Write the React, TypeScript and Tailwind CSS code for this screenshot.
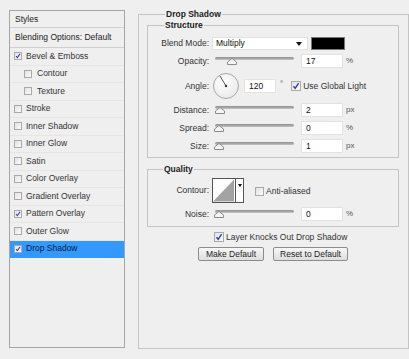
import React from "react";

const font = { fontFamily: '"Liberation Sans", Arial, sans-serif' };

function Check({ checked, size = 8 }: { checked?: boolean; size?: number }) {
  return (
    <span
      className="inline-flex shrink-0 items-center justify-center border border-[#a9a9a9] bg-gradient-to-br from-[#e2e2e2] to-[#fbfbfb]"
      style={{ width: size, height: size }}
    >
      {checked && (
        <svg width={size - 2} height={size - 2} viewBox="0 0 8 8">
          <path d="M1.5 4.2 L3.2 6.3 L6.6 1.2" fill="none" stroke="#2a3fa8" strokeWidth="1.4" />
        </svg>
      )}
    </span>
  );
}

const styleRows: { label: string; checked?: boolean; indent?: boolean; active?: boolean }[] = [
  { label: "Bevel & Emboss", checked: true },
  { label: "Contour", indent: true },
  { label: "Texture", indent: true },
  { label: "Stroke" },
  { label: "Inner Shadow" },
  { label: "Inner Glow" },
  { label: "Satin" },
  { label: "Color Overlay" },
  { label: "Gradient Overlay" },
  { label: "Pattern Overlay", checked: true },
  { label: "Outer Glow" },
  { label: "Drop Shadow", checked: true, active: true },
];

function Slider({ value, max }: { value: number; max: number }) {
  const left = 2 + (value / max) * 75;
  return (
    <div className="relative ml-[3px] h-full w-[85px]">
      <div className="absolute left-[3px] right-[3px] top-[3px] h-[3px] rounded-full bg-gradient-to-b from-[#8d8d8d] to-[#c4c4c4]" />
      <svg className="absolute top-[4px]" style={{ left }} width="10" height="7" viewBox="0 0 10 7">
        <path d="M5 0.5 L9.5 4 L9.5 6.5 L0.5 6.5 L0.5 4 Z" fill="#f4f4f4" stroke="#8a8a8a" strokeWidth="1" />
      </svg>
    </div>
  );
}

function Field({ value, w = 42 }: { value: string; w?: number }) {
  return (
    <div
      className="flex h-[14px] items-center border border-[#e2e2e2] bg-white pl-[4px] text-[8.5px] text-[#111]"
      style={{ width: w }}
    >
      {value}
    </div>
  );
}

function Label({ children }: { children: React.ReactNode }) {
  return <div className="w-[61px] shrink-0 text-right text-[8.5px] text-[#333]">{children}</div>;
}

function SliderRow({ label, value, max, unit, mt }: { label: string; value: number; max: number; unit: string; mt: string }) {
  return (
    <div className={`flex h-[14px] items-center ${mt}`}>
      <Label>{label}</Label>
      <Slider value={value} max={max} />
      <div className="ml-[4px]">
        <Field value={String(value)} />
      </div>
      <div className="ml-[3px] text-[8px] text-[#555]">{unit}</div>
    </div>
  );
}

export default function App() {
  return (
    <div className="flex h-[359px] w-[409px] overflow-hidden bg-[#efefef] pl-[9px] pt-[10px]" style={font}>
      {/* Left styles list */}
      <div className="flex h-[338px] w-[116px] shrink-0 flex-col border border-[#a5a5a5] bg-[#efefef]">
        <div className="flex h-[17px] items-center border-b border-[#cfcfcf] pl-[5px] text-[8.5px] text-[#222]">Styles</div>
        <div className="flex h-[20px] items-center border-b border-[#cfcfcf] pl-[5px] text-[8.5px] text-[#222]">
          Blending Options: Default
        </div>
        {styleRows.map((r) => (
          <div
            key={r.label}
            className={`flex h-[17.5px] items-center border-b text-[8.5px] ${
              r.active ? "border-[#3399ff] bg-[#3399ff] text-[#0b1a3a]" : "border-[#e6e6e6] text-[#333]"
            } ${r.indent ? "pl-[14px]" : "pl-[4px]"}`}
          >
            <Check checked={r.checked} />
            <span className={r.indent ? "ml-[5px]" : "ml-[4px]"}>{r.label}</span>
          </div>
        ))}
      </div>

      {/* Right panel */}
      <fieldset className="ml-[13px] h-[340px] w-[271px] shrink-0 border border-[#c4c4c4] pl-[8px] pr-[9px] mt-[-1px]">
        <legend className="ml-[18px] px-[1px] text-[8.5px] font-bold leading-[10px] text-[#222]">Drop Shadow</legend>

        <fieldset className="mt-[1px] border border-[#c4c4c4] pb-[4px]">
          <legend className="ml-[16px] px-[1px] text-[8.5px] font-bold leading-[10px] text-[#222]">Structure</legend>
          <div className="mt-[7px] flex h-[13px] items-center">
            <Label>Blend Mode:</Label>
            <div className="ml-[3px] flex h-[13px] w-[96px] items-center justify-between border border-[#e2e2e2] bg-white pl-[3px] pr-[5px] text-[8.5px] text-[#111]">
              <span>Multiply</span>
              <svg width="6" height="4" viewBox="0 0 6 4">
                <path d="M0 0 L6 0 L3 4 Z" fill="#111" />
              </svg>
            </div>
            <div className="ml-[3px] h-[13px] w-[34px] border border-[#777] bg-black" />
          </div>
          <SliderRow label="Opacity:" value={17} max={100} unit="%" mt="mt-[4px]" />
          <div className="mt-[5px] flex h-[26px] items-center">
            <Label>Angle:</Label>
            <div className="relative ml-[4px] h-[26px] w-[26px] rounded-full border border-[#a8a8a8] bg-[radial-gradient(circle_at_40%_35%,#ffffff,#e4e4e4)]">
              <svg className="absolute left-0 top-0" width="24" height="24" viewBox="0 0 24 24">
                <line x1="12" y1="12" x2="6" y2="2" stroke="#555" strokeWidth="1" />
                <circle cx="12" cy="12" r="1.2" fill="#333" />
              </svg>
            </div>
            <div className="ml-[5px]">
              <Field value="120" w={32} />
            </div>
            <div className="ml-[4px] mb-[4px] text-[8px] text-[#555]">°</div>
            <div className="ml-[8px] flex items-center">
              <Check checked size={10} />
              <span className="ml-[2px] text-[8.5px] text-[#333]">Use Global Light</span>
            </div>
          </div>
          <SliderRow label="Distance:" value={2} max={250} unit="px" mt="mt-[4px]" />
          <SliderRow label="Spread:" value={0} max={100} unit="%" mt="mt-[4px]" />
          <SliderRow label="Size:" value={1} max={250} unit="px" mt="mt-[4px]" />
        </fieldset>

        <fieldset className="mt-[6px] border border-[#c4c4c4] pb-[5px]">
          <legend className="ml-[15px] px-[1px] text-[8.5px] font-bold leading-[10px] text-[#222]">Quality</legend>
          <div className="mt-[4px] flex h-[25px] items-center">
            <Label>Contour:</Label>
            <div className="ml-[3px] flex h-[25px] w-[32px] border border-[#555] bg-white">
              <svg width="23" height="23" viewBox="0 0 23 23" className="border-r border-[#555]">
                <path d="M0 23 L22 0 L22 23 Z" fill="#a3a3a3" />
              </svg>
              <div className="flex flex-1 items-start justify-center pt-[5px]">
                <svg width="4" height="3" viewBox="0 0 4 3">
                  <path d="M0 0 L4 0 L2 3 Z" fill="#111" />
                </svg>
              </div>
            </div>
            <div className="ml-[11px] mt-[2px] flex items-center">
              <Check size={9} />
              <span className="ml-[2px] text-[8.5px] text-[#333]">Anti-aliased</span>
            </div>
          </div>
          <div className="mt-[4px]">
            <SliderRow label="Noise:" value={0} max={100} unit="%" mt="mt-0" />
          </div>
        </fieldset>

        <div className="ml-[67px] mt-[5px] flex h-[10px] items-center">
          <Check checked size={10} />
          <span className="ml-[2px] text-[8.5px] text-[#333]">Layer Knocks Out Drop Shadow</span>
        </div>
        <div className="mt-[5px] flex justify-center gap-[9px]">
          <button className="h-[14px] w-[66px] rounded-[2px] border border-[#8c8c8c] bg-gradient-to-b from-[#f7f7f7] to-[#dedede] text-[8.5px] text-[#222]">
            Make Default
          </button>
          <button className="h-[14px] w-[75px] rounded-[2px] border border-[#8c8c8c] bg-gradient-to-b from-[#f7f7f7] to-[#dedede] text-[8.5px] text-[#222]">
            Reset to Default
          </button>
        </div>
      </fieldset>
    </div>
  );
}
